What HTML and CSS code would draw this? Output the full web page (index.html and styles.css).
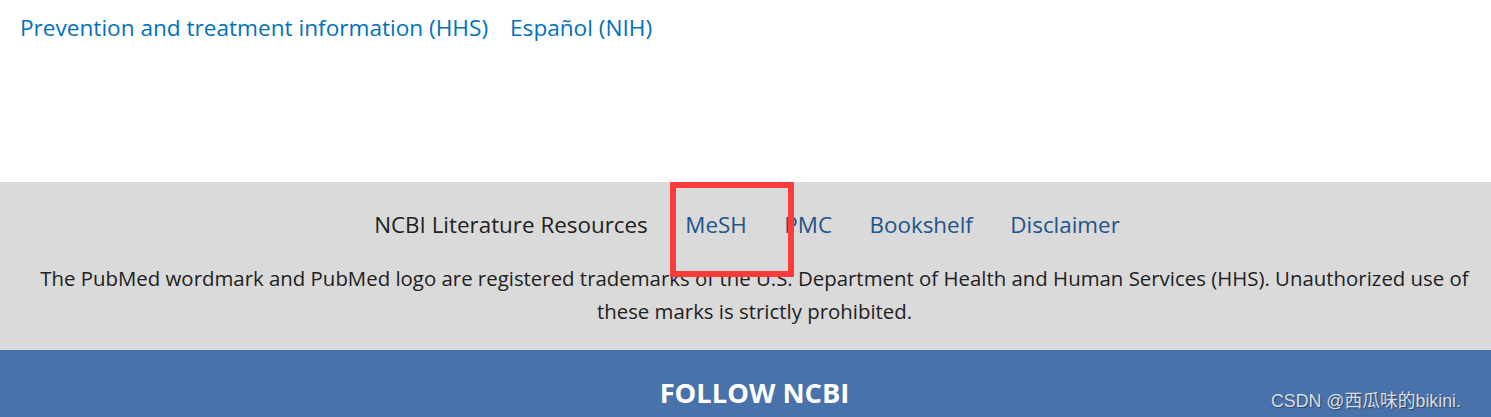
FILE: index.html
```html
<!DOCTYPE html>
<html lang="en">
<head>
<meta charset="utf-8">
<title>PubMed footer</title>
<link rel="stylesheet" href="styles.css">
</head>
<body>
<div class="page">
  <div class="top-links">
    <a href="#" class="top-link">Prevention and treatment information (HHS)</a>
    <a href="#" class="top-link">Español (NIH)</a>
  </div>
  <footer class="footer">
    <div class="lit">
      <div class="lit-row">
        <span class="lit-title">NCBI Literature Resources</span>
        <a href="#" class="lit-link mesh">MeSH<span class="highlight"></span></a>
        <a href="#" class="lit-link">PMC</a>
        <a href="#" class="lit-link">Bookshelf</a>
        <a href="#" class="lit-link">Disclaimer</a>
      </div>
      <p class="trademark">The PubMed wordmark and PubMed logo are registered trademarks of the U.S. Department of Health and Human Services (HHS). Unauthorized use of these marks is strictly prohibited.</p>
    </div>
    <div class="follow">
      <h2 class="follow-title">FOLLOW NCBI</h2>
      <span class="watermark">CSDN @西瓜味的bikini.</span>
    </div>
  </footer>
</div>
</body>
</html>
```
FILE: styles.css
```css
html, body {
  margin: 0;
  padding: 0;
  background: #ffffff;
}
body {
  font-family: "Open Sans", "Noto Sans", sans-serif;
}
.page {
  width: 1491px;
  height: 417px;
  overflow: hidden;
  display: flex;
  flex-direction: column;
}
.top-links {
  height: 182px;
  box-sizing: border-box;
  padding: 13px 0 0 20px;
  display: flex;
  gap: 22px;
  align-items: flex-start;
}
.top-link {
  color: #0071bc;
  text-decoration: none;
  font-size: 22.6px;
  line-height: 30px;
}
.footer {
  display: flex;
  flex-direction: column;
  flex: 1;
}
.lit {
  background: #dadada;
  height: 168px;
  box-sizing: border-box;
  padding-top: 28px;
  color: #212121;
}
.lit-row {
  display: flex;
  justify-content: center;
  gap: 37.5px;
  font-size: 22.4px;
  line-height: 30px;
  padding-left: 3px;
}
.lit-title {
  color: #212121;
}
.lit-link {
  color: #20558a;
  text-decoration: none;
}
.mesh {
  position: relative;
}
.highlight {
  position: absolute;
  left: -15px;
  top: -28px;
  width: 124px;
  height: 95px;
  box-sizing: border-box;
  border: 6px solid #fe3b3b;
  pointer-events: none;
}
.trademark {
  margin: 22px 12px 0 30px;
  text-align: center;
  font-size: 20.4px;
  line-height: 33px;
}
.follow {
  background: #4872a9;
  flex: 1;
  position: relative;
  display: flex;
  justify-content: center;
  align-items: flex-start;
  padding-left: 18px;
}
.follow-title {
  margin: 28px 0 0 0;
  color: #ffffff;
  font-size: 27.3px;
  line-height: 30px;
  font-weight: 700;
}
.watermark {
  position: absolute;
  right: 30px;
  top: 36px;
  font-family: "Liberation Sans", "Noto Sans CJK SC", sans-serif;
  font-size: 17.8px;
  color: #d8dde6;
  text-shadow: 1px 1px 1px rgba(40, 50, 70, 0.7);
}
```
